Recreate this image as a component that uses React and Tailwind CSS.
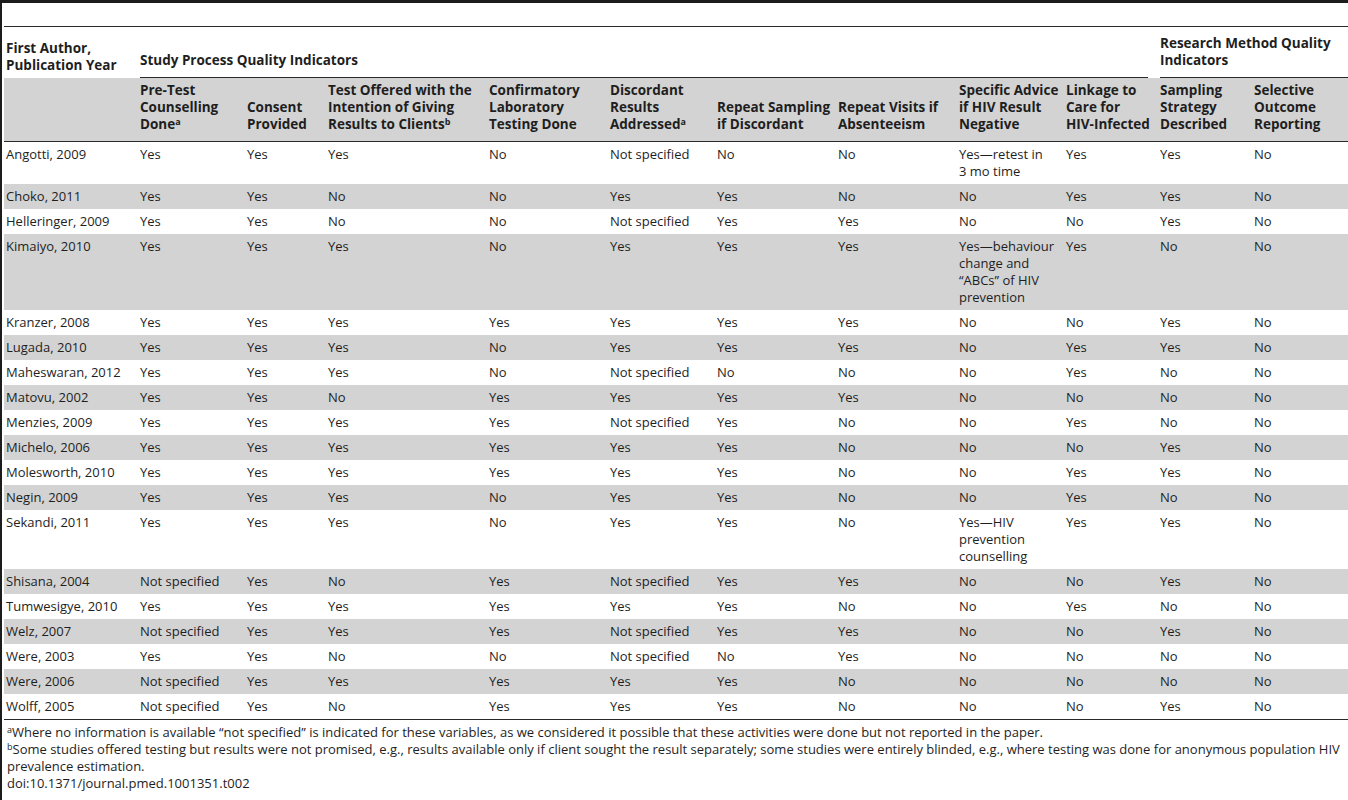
const rows = [
    ['Angotti, 2009', 'Yes', 'Yes', 'Yes', 'No', 'Not specified', 'No', 'No', 'Yes—retest in\n3 mo time', 'Yes', 'Yes', 'No'],
    ['Choko, 2011', 'Yes', 'Yes', 'No', 'No', 'Yes', 'Yes', 'No', 'No', 'Yes', 'Yes', 'No'],
    ['Helleringer, 2009', 'Yes', 'Yes', 'No', 'No', 'Not specified', 'Yes', 'Yes', 'No', 'No', 'Yes', 'No'],
    ['Kimaiyo, 2010', 'Yes', 'Yes', 'Yes', 'No', 'Yes', 'Yes', 'Yes', 'Yes—behaviour\nchange and\n\u201CABCs\u201D of HIV\nprevention', 'Yes', 'No', 'No'],
    ['Kranzer, 2008', 'Yes', 'Yes', 'Yes', 'Yes', 'Yes', 'Yes', 'Yes', 'No', 'No', 'Yes', 'No'],
    ['Lugada, 2010', 'Yes', 'Yes', 'Yes', 'No', 'Yes', 'Yes', 'Yes', 'No', 'Yes', 'Yes', 'No'],
    ['Maheswaran, 2012', 'Yes', 'Yes', 'Yes', 'No', 'Not specified', 'No', 'No', 'No', 'Yes', 'No', 'No'],
    ['Matovu, 2002', 'Yes', 'Yes', 'No', 'Yes', 'Yes', 'Yes', 'Yes', 'No', 'No', 'No', 'No'],
    ['Menzies, 2009', 'Yes', 'Yes', 'Yes', 'Yes', 'Not specified', 'Yes', 'No', 'No', 'Yes', 'No', 'No'],
    ['Michelo, 2006', 'Yes', 'Yes', 'Yes', 'Yes', 'Yes', 'Yes', 'No', 'No', 'No', 'Yes', 'No'],
    ['Molesworth, 2010', 'Yes', 'Yes', 'Yes', 'Yes', 'Yes', 'Yes', 'No', 'No', 'Yes', 'Yes', 'No'],
    ['Negin, 2009', 'Yes', 'Yes', 'Yes', 'No', 'Yes', 'Yes', 'No', 'No', 'Yes', 'No', 'No'],
    ['Sekandi, 2011', 'Yes', 'Yes', 'Yes', 'No', 'Yes', 'Yes', 'No', 'Yes—HIV\nprevention\ncounselling', 'Yes', 'Yes', 'No'],
    ['Shisana, 2004', 'Not specified', 'Yes', 'No', 'Yes', 'Not specified', 'Yes', 'Yes', 'No', 'No', 'Yes', 'No'],
    ['Tumwesigye, 2010', 'Yes', 'Yes', 'Yes', 'Yes', 'Yes', 'Yes', 'No', 'No', 'Yes', 'No', 'No'],
    ['Welz, 2007', 'Not specified', 'Yes', 'Yes', 'Yes', 'Not specified', 'Yes', 'Yes', 'No', 'No', 'Yes', 'No'],
    ['Were, 2003', 'Yes', 'Yes', 'No', 'No', 'Not specified', 'No', 'Yes', 'No', 'No', 'No', 'No'],
    ['Were, 2006', 'Not specified', 'Yes', 'Yes', 'Yes', 'Yes', 'Yes', 'No', 'No', 'No', 'No', 'No'],
    ['Wolff, 2005', 'Not specified', 'Yes', 'No', 'Yes', 'Yes', 'Yes', 'No', 'No', 'No', 'Yes', 'No'],
]

const Sup = ({ children }) => (
    <sup className="text-[9px] leading-none font-bold">{children}</sup>
)

// column headings, broken where the printed table breaks them
const subHeads = [
    <>Pre-Test<br />Counselling<br />Done<Sup>a</Sup></>,
    <>Consent<br />Provided</>,
    <>Test Offered with the<br />Intention of Giving<br />Results to Clients<Sup>b</Sup></>,
    <>Confirmatory<br />Laboratory<br />Testing Done</>,
    <>Discordant<br />Results<br />Addressed<Sup>a</Sup></>,
    <>Repeat Sampling<br />if Discordant</>,
    <>Repeat Visits if<br />Absenteeism</>,
    <>Specific Advice<br />if HIV Result<br />Negative</>,
    <>Linkage to<br />Care for<br />HIV-Infected</>,
    <>Sampling<br />Strategy<br />Described</>,
    <>Selective<br />Outcome<br />Reporting</>,
]

export default function App() {
    return (
        <div className="min-h-[800px] bg-white border-t-[3px] border-l-2 border-[#1c1c1c] pl-[2px] text-[13px] leading-[17px] text-[#1e1e1e] font-['Open_Sans',sans-serif] overflow-hidden">
            <div className="h-[24px] border-b border-[#2a2a2a]" />

            <table className="w-[1344px] table-fixed border-collapse">
                <colgroup>
                    <col className="w-[136px]" />
                    <col className="w-[107px]" />
                    <col className="w-[81px]" />
                    <col className="w-[161px]" />
                    <col className="w-[121px]" />
                    <col className="w-[107px]" />
                    <col className="w-[121px]" />
                    <col className="w-[121px]" />
                    <col className="w-[107px]" />
                    <col className="w-[94px]" />
                    <col className="w-[94px]" />
                    <col className="w-[94px]" />
                </colgroup>
                <thead className="text-[13.5px]">
                    {/* group headings */}
                    <tr>
                        <th className="text-left align-bottom font-bold pl-[2px] pb-[4px] pt-0 whitespace-nowrap">
                            First Author,<br />Publication Year
                        </th>
                        <th colSpan={9} className="p-0 text-left align-bottom font-bold">
                            <div className="mr-3 border-b border-[#2a2a2a] pb-2">
                                Study Process Quality Indicators
                            </div>
                        </th>
                        <th colSpan={2} className="p-0 text-left align-bottom font-bold">
                            <div className="border-b border-[#2a2a2a] pt-2 pb-2">
                                Research Method Quality<br />Indicators
                            </div>
                        </th>
                    </tr>
                    {/* column headings */}
                    <tr className="bg-[#d3d3d3] border-b border-[#2a2a2a]">
                        <th className="pt-[4px] pb-[8px]" />
                        {subHeads.map((h, i) => (
                            <th key={i} className="text-left align-bottom font-bold pt-[4px] pb-[8px] pl-0 pr-0 whitespace-nowrap">
                                {h}
                            </th>
                        ))}
                    </tr>
                </thead>
                <tbody>
                    {rows.map((r, i) => (
                        <tr
                            key={r[0]}
                            className={`${i % 2 === 1 ? 'bg-[#d3d3d3]' : 'bg-white'} ${i === rows.length - 1 ? 'border-b border-[#2a2a2a]' : ''}`}
                        >
                            {r.map((c, j) => (
                                <td
                                    key={j}
                                    className={`align-top py-[4px] pr-1 whitespace-pre-line ${j === 0 ? 'pl-[2px]' : 'pl-0'}`}
                                >
                                    {c}
                                </td>
                            ))}
                        </tr>
                    ))}
                </tbody>
            </table>

            {/* footnotes */}
            <div className="pt-[4px] pl-[3px] text-[13px] leading-[17px] whitespace-nowrap">
                <p>
                    <sup className="text-[9px] leading-none">a</sup>Where no information is available {'\u201C'}not specified{'\u201D'} is indicated for these variables, as we considered it possible that these activities were done but not reported in the paper.
                </p>
                <p>
                    <sup className="text-[9px] leading-none">b</sup>Some studies offered testing but results were not promised, e.g., results available only if client sought the result separately; some studies were entirely blinded, e.g., where testing was done for anonymous population HIV
                </p>
                <p>prevalence estimation.</p>
                <p>doi:10.1371/journal.pmed.1001351.t002</p>
            </div>
        </div>
    )
}
